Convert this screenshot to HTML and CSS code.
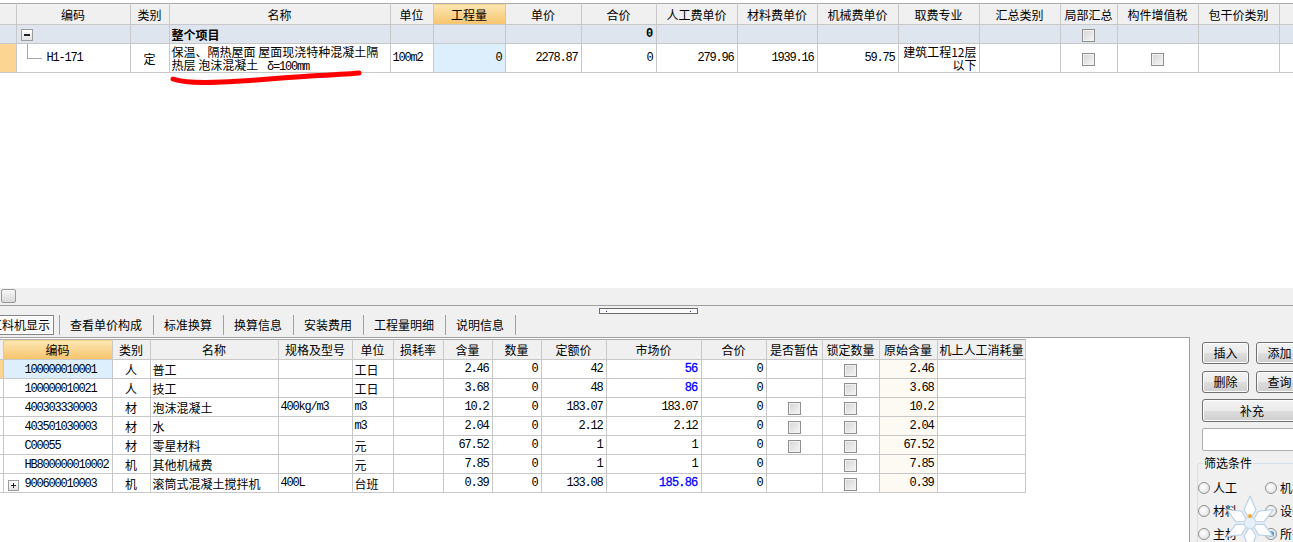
FILE: index.html
```html
<!DOCTYPE html>
<html lang="zh-CN">
<head>
<meta charset="utf-8">
<title>定额</title>
<link rel="stylesheet" href="styles.css">
</head>
<body>
<div class="app">
  <div class="top-pane">
    <table class="grid top-grid">
      <colgroup>
        <col class="w16"><col class="w114"><col class="w39"><col class="w221"><col class="w43"><col class="w72"><col class="w76"><col class="w75"><col class="w81"><col class="w80"><col class="w81"><col class="w81"><col class="w81"><col class="w57"><col class="w81"><col class="w81"><col class="w30">
      </colgroup>
      <thead>
        <tr class="th-row">
          <th></th><th>编码</th><th>类别</th><th>名称</th><th>单位</th><th class="hl">工程量</th><th>单价</th><th>合价</th><th>人工费单价</th><th>材料费单价</th><th>机械费单价</th><th>取费专业</th><th>汇总类别</th><th>局部汇总</th><th>构件增值税</th><th>包干价类别</th><th></th>
        </tr>
      </thead>
      <tbody>
        <tr class="group-row">
          <td class="gut"></td>
          <td class="tree-cell"><span class="tbox minus"></span></td>
          <td></td>
          <td class="b">整个项目</td>
          <td></td><td></td><td></td>
          <td class="n b">0</td>
          <td></td><td></td><td></td><td></td><td></td>
          <td class="c"><span class="cb"></span></td>
          <td></td><td></td><td></td>
        </tr>
        <tr class="item-row">
          <td class="gut sel"></td>
          <td class="tree-cell"><div class="tree"><span class="elbow"></span><span class="mono">H1-171</span></div></td>
          <td class="c">定</td>
          <td class="wrap"><div class="l1">保温、隔热屋面 屋面现浇特种混凝土隔</div><div class="l2">热层 泡沫混凝土 <span class="mono">&nbsp;δ=100mm</span></div></td>
          <td class="mono">100m2</td>
          <td class="n cur">0</td>
          <td class="n">2278.87</td>
          <td class="n">0</td>
          <td class="n">279.96</td>
          <td class="n">1939.16</td>
          <td class="n">59.75</td>
          <td class="wrap r">建筑工程12层以下</td>
          <td></td>
          <td class="c"><span class="cb"></span></td>
          <td class="c"><span class="cb"></span></td>
          <td></td><td></td>
        </tr>
      </tbody>
    </table>
    <svg class="annot" width="400" height="100" viewBox="0 0 400 100">
      <path d="M173 79 C185 83 200 83 222 82 C250 81 280 78 310 76 C330 75 348 74 359 73" fill="none" stroke="#ff0000" stroke-width="5" stroke-linecap="round"/>
    </svg>
  </div>

  <div class="hscroll"><div class="hthumb"></div></div>

  <div class="splitter"><div class="grip"><i></i><i></i></div></div>

  <div class="tabs">
    <div class="tab active">工料机显示</div>
    <div class="tab">查看单价构成</div>
    <div class="tab">标准换算</div>
    <div class="tab">换算信息</div>
    <div class="tab">安装费用</div>
    <div class="tab">工程量明细</div>
    <div class="tab last">说明信息</div>
  </div>

  <div class="bottom">
    <div class="grid-panel">
      <table class="grid bot-grid">
        <colgroup>
          <col class="w3"><col class="w109"><col class="w38"><col class="w128"><col class="w74"><col class="w41"><col class="w50"><col class="w49"><col class="w49"><col class="w65"><col class="w95"><col class="w65"><col class="w56"><col class="w57"><col class="w58"><col class="w88">
        </colgroup>
        <thead>
          <tr class="bh-row">
            <th></th><th class="hl">编码</th><th>类别</th><th>名称</th><th>规格及型号</th><th>单位</th><th>损耗率</th><th>含量</th><th>数量</th><th>定额价</th><th>市场价</th><th>合价</th><th>是否暂估</th><th>锁定数量</th><th>原始含量</th><th>机上人工消耗量</th>
          </tr>
        </thead>
        <tbody>
          <tr>
            <td class="gut sel"></td><td class="code cur"><span class="slot"></span><span class="mono">100000010001</span></td><td class="c">人</td><td>普工</td><td></td><td>工日</td><td></td>
            <td class="n">2.46</td><td class="n">0</td><td class="n">42</td><td class="n blue">56</td><td class="n">0</td><td></td><td class="c"><span class="cb"></span></td><td class="n orig">2.46</td><td></td>
          </tr>
          <tr>
            <td class="gut"></td><td class="code"><span class="slot"></span><span class="mono">100000010021</span></td><td class="c">人</td><td>技工</td><td></td><td>工日</td><td></td>
            <td class="n">3.68</td><td class="n">0</td><td class="n">48</td><td class="n blue">86</td><td class="n">0</td><td></td><td class="c"><span class="cb"></span></td><td class="n orig">3.68</td><td></td>
          </tr>
          <tr>
            <td class="gut"></td><td class="code"><span class="slot"></span><span class="mono">400303330003</span></td><td class="c">材</td><td>泡沫混凝土</td><td class="mono">400kg/m3</td><td class="mono">m3</td><td></td>
            <td class="n">10.2</td><td class="n">0</td><td class="n">183.07</td><td class="n">183.07</td><td class="n">0</td><td class="c"><span class="cb"></span></td><td class="c"><span class="cb"></span></td><td class="n orig">10.2</td><td></td>
          </tr>
          <tr>
            <td class="gut"></td><td class="code"><span class="slot"></span><span class="mono">403501030003</span></td><td class="c">材</td><td>水</td><td></td><td class="mono">m3</td><td></td>
            <td class="n">2.04</td><td class="n">0</td><td class="n">2.12</td><td class="n">2.12</td><td class="n">0</td><td class="c"><span class="cb"></span></td><td class="c"><span class="cb"></span></td><td class="n orig">2.04</td><td></td>
          </tr>
          <tr>
            <td class="gut"></td><td class="code"><span class="slot"></span><span class="mono">C00055</span></td><td class="c">材</td><td>零星材料</td><td></td><td>元</td><td></td>
            <td class="n">67.52</td><td class="n">0</td><td class="n">1</td><td class="n">1</td><td class="n">0</td><td class="c"><span class="cb"></span></td><td class="c"><span class="cb"></span></td><td class="n orig">67.52</td><td></td>
          </tr>
          <tr>
            <td class="gut"></td><td class="code"><span class="slot"></span><span class="mono">HB800000010002</span></td><td class="c">机</td><td>其他机械费</td><td></td><td>元</td><td></td>
            <td class="n">7.85</td><td class="n">0</td><td class="n">1</td><td class="n">1</td><td class="n">0</td><td></td><td class="c"><span class="cb"></span></td><td class="n orig">7.85</td><td></td>
          </tr>
          <tr>
            <td class="gut"></td><td class="code"><span class="slot"><span class="tbox plus"></span></span><span class="mono">900600010003</span></td><td class="c">机</td><td>滚筒式混凝土搅拌机</td><td class="mono">400L</td><td>台班</td><td></td>
            <td class="n">0.39</td><td class="n">0</td><td class="n">133.08</td><td class="n blue">185.86</td><td class="n">0</td><td></td><td class="c"><span class="cb"></span></td><td class="n orig">0.39</td><td></td>
          </tr>
        </tbody>
      </table>
    </div>

    <div class="side">
      <div class="btn-row"><div class="btn">插入</div><div class="btn">添加</div></div>
      <div class="btn-row r2"><div class="btn">删除</div><div class="btn">查询</div></div>
      <div class="btn wide">补充</div>
      <div class="textbox"></div>
      <fieldset class="filter">
        <legend>筛选条件</legend>
        <div class="radio-row"><label class="radio"><span class="rc"></span>人工</label><label class="radio"><span class="rc"></span>机械</label></div>
        <div class="radio-row"><label class="radio"><span class="rc"></span>材料</label><label class="radio"><span class="rc"></span>设备</label></div>
        <div class="radio-row"><label class="radio"><span class="rc"></span>主材</label><label class="radio"><span class="rc on"></span>所有</label></div>
      </fieldset>
      <svg class="flake" width="80" height="70" viewBox="0 0 80 70">
        <g transform="translate(40 38)" fill="#ffffff" stroke="#b3cde8" stroke-width="1.1" stroke-linejoin="round">
          <polygon points="0,-3 -6,-13 0,-27 6,-13"/>
          <polygon points="0,-3 -6,-13 0,-27 6,-13" transform="rotate(60)"/>
          <polygon points="0,-3 -6,-13 0,-27 6,-13" transform="rotate(120)"/>
          <polygon points="0,-3 -6,-13 0,-27 6,-13" transform="rotate(180)"/>
          <polygon points="0,-3 -6,-13 0,-27 6,-13" transform="rotate(240)"/>
          <polygon points="0,-3 -6,-13 0,-27 6,-13" transform="rotate(300)"/>
          <circle cx="0" cy="0" r="6" fill="#e4eff9" stroke="#c3d8ee"/>
        </g>
        <circle cx="40" cy="31" r="2" fill="#f5a623"/>
      </svg>
    </div>
  </div>
</div>
</body>
</html>
```

FILE: styles.css
```css
* { box-sizing: border-box; }
html, body { margin: 0; padding: 0; }
body {
  width: 1293px;
  height: 542px;
  overflow: hidden;
  background: #ffffff;
  color: #000;
  font-family: "Noto Sans CJK SC", "Noto Sans", sans-serif;
  font-size: 12px;
}
.app { width: 1293px; height: 542px; overflow: hidden; }

/* column widths */
.w3 { width: 3px; } .w16 { width: 16px; } .w30 { width: 30px; }
.w38 { width: 38px; } .w39 { width: 39px; } .w41 { width: 41px; }
.w43 { width: 43px; } .w49 { width: 49px; } .w50 { width: 50px; }
.w56 { width: 56px; } .w57 { width: 57px; } .w58 { width: 58px; }
.w65 { width: 65px; } .w72 { width: 72px; } .w74 { width: 74px; }
.w75 { width: 75px; } .w76 { width: 76px; } .w80 { width: 80px; }
.w81 { width: 81px; } .w88 { width: 88px; } .w95 { width: 95px; }
.w109 { width: 109px; } .w114 { width: 114px; } .w128 { width: 128px; }
.w221 { width: 221px; }

/* generic grid */
.grid { border-collapse: collapse; table-layout: fixed; }
.grid th, .grid td {
  border: 1px solid #c8c8c8;
  padding: 0 2px;
  white-space: nowrap;
  overflow: hidden;
  line-height: 13px;
  font-weight: normal;
  text-align: left;
  vertical-align: middle;
}
.grid th {
  background: #f0f0f0;
  text-align: center;
  border-top-color: #a9a9a9;
}
.grid th:first-child, .grid td:first-child { border-left: none; }
.grid th.hl { background: linear-gradient(#fde6b4, #f6c46c); }
.grid td.n { text-align: right; padding-right: 3px; font-family: "Liberation Mono", monospace; letter-spacing: -1.2px; }
.grid td.c { text-align: center; }
.grid td.r { text-align: right; }
.grid td.b { font-weight: bold; }
.grid td.n.b { font-family: "Liberation Mono", monospace; letter-spacing: -0.8px; }
.mono { font-family: "Liberation Mono", monospace; letter-spacing: -1.2px; }
.grid td.mono { font-family: "Liberation Mono", monospace; letter-spacing: -1.2px; }
.grid td.wrap { white-space: normal; word-break: break-all; }
.wrap .l1, .wrap .l2 { height: 13px; line-height: 13px; white-space: nowrap; overflow: visible; }
.grid td.cur { background: #ddeefc; }
.grid td.gut { background: #ffffff; padding: 0; }
.grid td.gut.sel { background: #fcd592; }
.blue { color: #0000ff; font-weight: bold; }
.grid td.n.blue { letter-spacing: -0.8px; -webkit-text-stroke: 0.3px #0000ff; }

/* top pane */
.top-pane { position: relative; height: 288px; padding-top: 3px; overflow: hidden; background: #fff; }
.top-grid { width: 1309px; }
.th-row { height: 21px; }
.group-row { height: 19px; }
.group-row td { background: #dfe5ee; }
.group-row td.gut { background: #dfe5ee; }
.item-row { height: 29px; }
.tree-cell { padding: 0 !important; }
.group-row .tree-cell { padding-left: 4px !important; }
.tree { display: flex; align-items: flex-start; height: 28px; }
.elbow {
  width: 15px;
  height: 15px;
  margin-left: 10px;
  border-left: 1px solid #a8a8a8;
  border-bottom: 1px solid #a8a8a8;
  flex: none;
}
.tree .mono { margin: 8px 0 0 5px; }

.tbox {
  display: inline-block;
  position: relative;
  width: 12px;
  height: 12px;
  border: 1px solid #9c9c9c;
  background: linear-gradient(#ffffff, #e2e2e2);
  vertical-align: middle;
}
.tbox::before {
  content: "";
  position: absolute;
  left: 2px; top: 4px;
  width: 6px; height: 2px;
  background: #222;
}
.tbox.plus::after {
  content: "";
  position: absolute;
  left: 4px; top: 2px;
  width: 2px; height: 6px;
  background: #222;
}

.cb {
  display: inline-block;
  width: 13px;
  height: 13px;
  border: 1px solid #8f8f8f;
  background: linear-gradient(135deg, #d4d4d4, #f6f6f6);
  box-shadow: inset 0 0 0 1px #f2f2f2;
  vertical-align: middle;
}

.annot { position: absolute; left: 0; top: 0; pointer-events: none; }

/* horizontal scroll */
.hscroll { height: 17px; background: #f0f0f0; padding: 1px 0 0 1px; }
.hthumb {
  width: 15px;
  height: 14px;
  border: 1px solid #9a9a9a;
  border-radius: 2px;
  background: linear-gradient(#f7f7f7, #d9d9d9);
}

/* splitter */
.splitter { height: 9px; border-top: 1px solid #a0a0a0; background: #f0f0f0; padding-top: 2px; }
.grip {
  position: relative;
  margin-left: 599px;
  width: 99px;
  height: 6px;
  border: 1px solid #6a6a6a;
  background: #fbfbfb;
  display: flex;
  justify-content: space-between;
  align-items: center;
  padding: 0 6px;
}
.grip i { display: block; width: 1px; height: 1px; background: #303070; }

/* tabs */
.tabs { height: 23px; background: #f0f0f0; display: flex; padding-top: 1px; overflow: hidden; }
.tab {
  height: 20px;
  line-height: 20px;
  padding: 0 11px 0 10px;
  border-left: 1px solid #a0a0a0;
  white-space: nowrap;
  flex: none;
}
.tab.last { border-right: 1px solid #a0a0a0; }
.tab.active {
  margin-left: -11px;
  margin-right: 5px;
  padding: 0 3px 0 0;
  border: 1px solid #858585;
  background: #f9f9f9;
  box-shadow: inset 0 0 0 1px #ffffff;
  line-height: 18px;
}

/* bottom */
.bottom { display: flex; height: 205px; }
.grid-panel {
  width: 1190px;
  flex: none;
  height: 205px;
  border-top: 1px solid #a0a0a0;
  border-right: 1px solid #a0a0a0;
  background: #fff;
  padding-top: 1px;
  overflow: hidden;
}
.bot-grid { width: 1025px; }
.bh-row { height: 20px; }
.bot-grid tbody tr { height: 19px; }
.bot-grid td.code { padding: 0; }
.slot { display: inline-block; width: 21px; padding-left: 4px; vertical-align: middle; }
.slot .tbox { width: 11px; height: 11px; }
.slot .tbox::before { left: 2px; top: 4px; width: 5px; height: 1px; }
.slot .tbox.plus::after { left: 4px; top: 2px; height: 5px; width: 1px; }
.bot-grid td.orig { background: #fdf9f3; }

/* side panel */
.side {
  position: relative;
  flex: 1;
  background: #f0f0f0;
  padding: 5px 0 0 12px;
  overflow: hidden;
}
.btn-row { display: flex; gap: 7px; margin-bottom: 7px; }
.btn-row.r2 { margin-bottom: 6px; }
.btn {
  flex: none;
  width: 47px;
  height: 22px;
  line-height: 20px;
  text-align: center;
  border: 1px solid #707070;
  border-radius: 3px;
  background: linear-gradient(#f2f2f2 0%, #ebebeb 50%, #dddddd 51%, #cfcfcf 100%);
  box-shadow: inset 0 0 0 1px #fcfcfc;
  white-space: nowrap;
}
.btn.wide { width: 100px; height: 23px; line-height: 21px; margin-bottom: 6px; }
.textbox {
  width: 100px;
  height: 23px;
  border: 1px solid #abadb3;
  border-radius: 2px;
  background: #fff;
}
.filter {
  margin: 5px 0 0 -5px;
  padding: 0;
  width: 110px;
  border: 1px solid #d5dfe5;
  border-radius: 3px;
  min-width: 0;
}
.filter legend { padding: 0 1px; margin-left: 5px; line-height: 14px; }
.radio-row { display: flex; height: 23px; align-items: center; }
.radio-row:first-of-type { margin-top: 6px; }
.radio { display: flex; align-items: center; gap: 3px; width: 67px; flex: none; white-space: nowrap; }
.rc {
  width: 12px;
  height: 12px;
  border: 1px solid #8e8f8f;
  border-radius: 50%;
  background: radial-gradient(circle at 40% 40%, #ffffff, #dcdcdc);
  flex: none;
  position: relative;
}
.rc.on::after {
  content: "";
  position: absolute;
  left: 2px; top: 2px;
  width: 6px; height: 6px;
  border-radius: 50%;
  background: radial-gradient(circle at 40% 40%, #8fd0ff, #1a5fb4);
}
.flake { position: absolute; left: 20px; top: 148px; opacity: 0.95; pointer-events: none; }
```
